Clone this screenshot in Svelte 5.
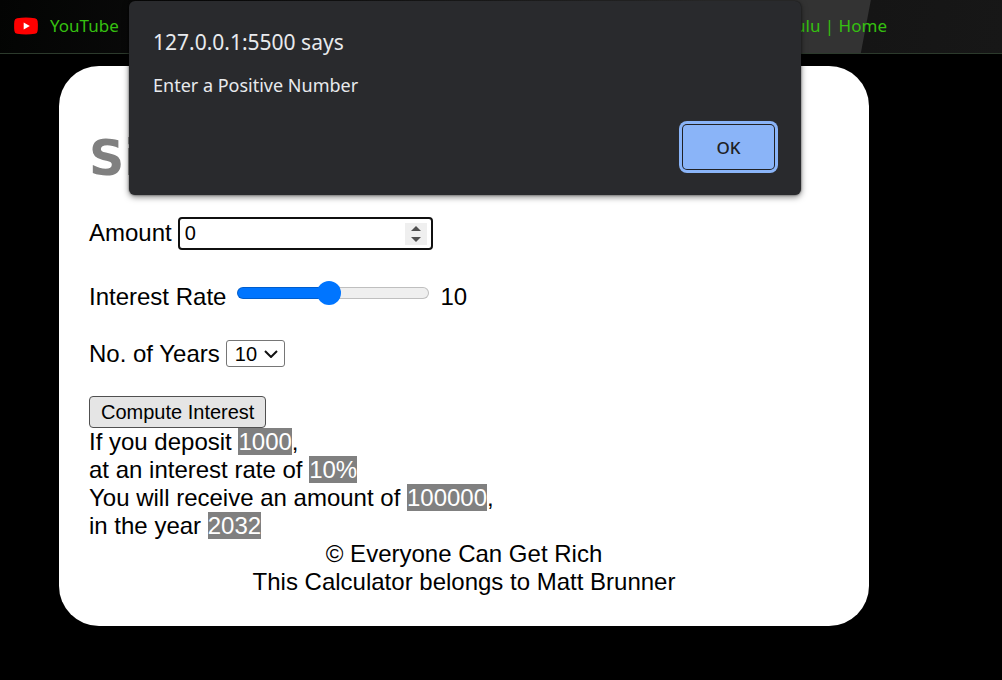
<script>
  let amount = $state(0);
  let rate = $state(10);
  let years = $state(10);
  let open = $state(true);
  let result = $state({ deposit: 1000, rate: 10, total: 100000, year: 2032 });

  // The slider runs from 1 to 20.
  let fill = $derived(((rate - 1) / 19) * 100);
  const options = Array.from({ length: 10 }, (_, i) => i + 1);

  function compute(event) {
    event.preventDefault();
    if (amount <= 0) {
      open = true;
      return;
    }
    result = { deposit: amount, rate, total: amount * years * rate, year: 2022 + years };
  }
</script>

<header class="bar">
  <a class="bookmark" href="#youtube">
    <svg width="24" height="18" viewBox="0 0 24 18" aria-hidden="true">
      <path
        fill="#f00"
        d="M3 1.2Q12 0 21 1.2Q23.3 1.6 23.6 4Q24.2 9 23.6 14Q23.3 16.4 21 16.8Q12 18 3 16.8Q.7 16.4 .4 14Q-.2 9 .4 4Q.7 1.6 3 1.2Z"
      />
      <path fill="#fff" d="M9.7 5.4 15.8 9 9.7 12.6Z" />
    </svg>
    YouTube
  </a>
  <a class="bookmark" href="#home">Hulu | Home</a>
</header>

<main class="card">
  <h1>Simple Interest</h1>
  <form onsubmit={compute} novalidate>
    <div class="row amount">
      <label for="amount">Amount</label>
      <div class="number">
        <input id="amount" type="number" bind:value={amount} />
        <div class="spinner">
          <button type="button" aria-label="Increase amount" onclick={() => (amount += 1)}>
            <svg width="10" height="5" viewBox="0 0 10 5"><path fill="#505050" d="M0 5 5 0 10 5Z" /></svg>
          </button>
          <button type="button" aria-label="Decrease amount" onclick={() => (amount -= 1)}>
            <svg width="10" height="5" viewBox="0 0 10 5"><path fill="#505050" d="M0 0 5 5 10 0Z" /></svg>
          </button>
        </div>
      </div>
    </div>
    <div class="row rate">
      <label for="rate">Interest Rate</label>
      <input id="rate" type="range" min="1" max="20" bind:value={rate} style="--fill: {fill}%" />
      <output for="rate">{rate}</output>
    </div>
    <div class="row years">
      <label for="years">No. of Years</label>
      <div class="select">
        <select id="years" bind:value={years}>
          {#each options as n}
            <option value={n}>{n}</option>
          {/each}
        </select>
        <svg width="14" height="8" viewBox="0 0 14 8" aria-hidden="true">
          <path d="M1 1 7 7 13 1" fill="none" stroke="#111" stroke-width="2" />
        </svg>
      </div>
    </div>
    <button class="compute" type="submit">Compute Interest</button>
  </form>
  <p>
    If you deposit <mark>{result.deposit}</mark>,<br />
    at an interest rate of <mark>{result.rate}%</mark><br />
    You will receive an amount of <mark>{result.total}</mark>,<br />
    in the year <mark>{result.year}</mark>
  </p>
  <footer>
    © Everyone Can Get Rich<br />
    This Calculator belongs to Matt Brunner
  </footer>
</main>

{#if open}
  <div class="dialog" role="alertdialog" aria-labelledby="origin" aria-describedby="message">
    <h2 id="origin">127.0.0.1:5500 says</h2>
    <p id="message">Enter a Positive Number</p>
    <button class="ok" type="button" onclick={() => (open = false)}>OK</button>
  </div>
{/if}

<style>
  :global(body) {
    margin: 0;
    background: #000;
    font: 24px/28px "Liberation Sans", Arial, sans-serif;
    color: #000;
  }

  h1,
  h2,
  p {
    margin: 0;
  }

  button,
  input,
  select {
    box-sizing: border-box;
    margin: 0;
    font-family: inherit;
  }

  .bar {
    box-sizing: border-box;
    display: flex;
    justify-content: space-between;
    align-items: center;
    height: 54px;
    padding: 0 115px 2px 14px;
    border-bottom: 1px solid #2c3a2c;
    background: linear-gradient(100.7deg, #030403 0, #0b0b0b 20%, #333 70%, #333 86%, #151515 86.1%, #171717 100%);
  }

  .bookmark {
    display: flex;
    align-items: center;
    gap: 12px;
    font: 17px/24px "Noto Sans", sans-serif;
    color: #35c010;
    text-decoration: none;
  }

  .card {
    margin: 12px 133px 54px 59px;
    padding: 30px;
    border-radius: 40px;
    background: #fff;
  }

  h1 {
    margin: 33px 0 27px;
    font: bold 49px/60px "DejaVu Sans", Verdana, sans-serif;
    color: #808080;
  }

  .row {
    display: flex;
    align-items: center;
  }

  .amount {
    gap: 6px;
    height: 34px;
    margin-bottom: 33px;
  }

  .number {
    position: relative;
  }

  .number input {
    display: block;
    width: 255px;
    height: 33px;
    padding: 0 32px 0 5px;
    border: 2px solid #101010;
    border-radius: 4px;
    outline: none;
    background: #fff;
    font-size: 20px;
    appearance: textfield;
  }

  .number input::-webkit-inner-spin-button {
    appearance: none;
  }

  .spinner {
    position: absolute;
    top: 6px;
    right: 6px;
    display: grid;
    width: 22px;
    height: 22px;
    background: #efefef;
  }

  .spinner button {
    display: grid;
    place-items: center;
    padding: 0;
    border: 0;
    background: none;
  }

  .rate {
    gap: 11px;
    height: 28px;
    margin-bottom: 28px;
  }

  .rate input {
    width: 192px;
    height: 24px;
    margin-bottom: 8px;
    appearance: none;
    background: none;
  }

  .rate input::-webkit-slider-runnable-track {
    box-sizing: border-box;
    height: 12px;
    border: 1px solid rgb(0 0 0 / 20%);
    border-radius: 6px;
    background: linear-gradient(90deg, #0075ff var(--fill), #efefef var(--fill)) border-box;
  }

  .rate input::-webkit-slider-thumb {
    width: 24px;
    height: 24px;
    margin-top: -7px;
    appearance: none;
    border-radius: 50%;
    background: #0075ff;
  }

  .years {
    gap: 6px;
    height: 29px;
    margin-bottom: 28px;
  }

  .select {
    position: relative;
  }

  .select select {
    display: block;
    width: 59px;
    height: 27px;
    padding: 0 0 0 8px;
    border: 1px solid #767676;
    border-radius: 3px;
    appearance: none;
    background: #fff;
    font-size: 20px;
    color: #000;
  }

  .select svg {
    position: absolute;
    top: 10px;
    right: 7px;
    pointer-events: none;
  }

  .compute {
    display: block;
    height: 32px;
    padding: 0 11px;
    border: 1px solid #505050;
    border-radius: 4px;
    background: #e5e5e5;
    font-size: 20px;
    color: #000;
  }

  mark {
    background: #808080;
    color: #fff;
  }

  footer {
    text-align: center;
  }

  .dialog {
    position: absolute;
    top: 1px;
    left: calc(50% - 372px);
    box-sizing: border-box;
    display: flex;
    flex-direction: column;
    width: 672px;
    padding: 26px 24px;
    border-radius: 6px;
    background: #292a2d;
    box-shadow: 0 2px 6px rgb(0 0 0 / 50%), 0 0 2px rgb(0 0 0 / 60%);
    font-family: "Noto Sans", sans-serif;
    color: #e8eaed;
  }

  .dialog h2 {
    margin-bottom: 14px;
    font-size: 21px;
    font-weight: 400;
    line-height: 30px;
  }

  .dialog p {
    margin-bottom: 26px;
    font-size: 18px;
    line-height: 28px;
  }

  .ok {
    align-self: flex-end;
    width: 91px;
    height: 44px;
    margin-right: 3px;
    border: 0;
    border-radius: 4px;
    background: #8ab4f8;
    box-shadow: 0 0 0 1px #202124, 0 0 0 4px #8ab4f8;
    font-size: 17px;
    font-weight: 500;
    color: #202124;
  }
</style>
